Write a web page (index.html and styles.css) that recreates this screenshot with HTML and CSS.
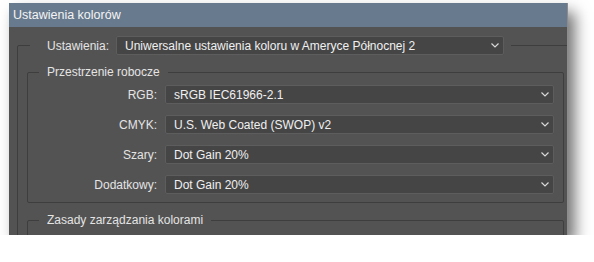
FILE: index.html
```html
<!DOCTYPE html>
<html>
<head>
	<meta charset="utf-8">
	<title>Ustawienia kolorów</title>
	<link rel="stylesheet" href="styles.css">
</head>
<body>
	<div class="window">
		<div class="titlebar">Ustawienia kolorów</div>
		<div class="content">
			<fieldset class="group outer">
				<legend class="settings">
					<span class="settings-label">Ustawienia:</span>
					<div class="select wide">
						<span>Uniwersalne ustawienia koloru w Ameryce Północnej 2</span>
						<svg class="chev" width="8" height="5" viewBox="0 0 8 5"><path d="M0.5 0.5 L4 4 L7.5 0.5" fill="none" stroke="#d8d8d8" stroke-width="1.2"/></svg>
					</div>
				</legend>

				<fieldset class="group inner">
					<legend>Przestrzenie robocze</legend>
					<div class="row">
						<label>RGB:</label>
						<div class="select">
							<span>sRGB IEC61966-2.1</span>
							<svg class="chev" width="8" height="5" viewBox="0 0 8 5"><path d="M0.5 0.5 L4 4 L7.5 0.5" fill="none" stroke="#d8d8d8" stroke-width="1.2"/></svg>
						</div>
					</div>
					<div class="row">
						<label>CMYK:</label>
						<div class="select">
							<span>U.S. Web Coated (SWOP) v2</span>
							<svg class="chev" width="8" height="5" viewBox="0 0 8 5"><path d="M0.5 0.5 L4 4 L7.5 0.5" fill="none" stroke="#d8d8d8" stroke-width="1.2"/></svg>
						</div>
					</div>
					<div class="row">
						<label>Szary:</label>
						<div class="select">
							<span>Dot Gain 20%</span>
							<svg class="chev" width="8" height="5" viewBox="0 0 8 5"><path d="M0.5 0.5 L4 4 L7.5 0.5" fill="none" stroke="#d8d8d8" stroke-width="1.2"/></svg>
						</div>
					</div>
					<div class="row">
						<label>Dodatkowy:</label>
						<div class="select">
							<span>Dot Gain 20%</span>
							<svg class="chev" width="8" height="5" viewBox="0 0 8 5"><path d="M0.5 0.5 L4 4 L7.5 0.5" fill="none" stroke="#d8d8d8" stroke-width="1.2"/></svg>
						</div>
					</div>
				</fieldset>

				<fieldset class="group inner policies">
					<legend>Zasady zarządzania kolorami</legend>
					<div class="spacer"></div>
				</fieldset>
			</fieldset>
		</div>
	</div>
</body>
</html>
```

FILE: styles.css
```css
*{
	margin:0;
	padding:0;
	box-sizing:border-box;
}
body{
	background:#fff;
	font-family:"Liberation Sans",Arial,sans-serif;
	font-size:12px;
	color:#e4e4e4;
}
.window{
	margin:3px 0 0 9px;
	width:559px;
	height:232px;
	overflow:hidden;
	background:#535353;
	border-right:1px solid #8c8c8c;
	box-shadow:7px 9px 14px rgba(0,0,0,.55);
	display:flex;
	flex-direction:column;
}
.titlebar{
	height:24px;
	flex:none;
	background:#687a8e;
	color:#f4f4f4;
	font-size:12.5px;
	line-height:24px;
	padding-left:4px;
}
.content{
	padding:9px 0 0 8px;
}
.group{
	border:1px solid #3e3e3e;
	border-radius:2px;
	min-width:0;
}
.outer{
	width:580px;
	padding:0 0 0 9px;
}
.settings{
	margin-left:3px;
	padding:0 7px 0 17px;
	display:flex;
	align-items:center;
}
.settings-label{
	margin-right:7px;
}
.select{
	height:19px;
	background:#454545;
	border:1px solid #5d5d5d;
	border-radius:2px;
	color:#f0f0f0;
	display:flex;
	align-items:center;
	justify-content:space-between;
	padding:0 4px 0 8px;
	width:389px;
}
.select.wide{
	width:388px;
}
.chev{
	flex:none;
}
.inner{
	width:537px;
	margin-top:10px;
	padding:6px 9px 8px 0;
	display:flex;
	flex-direction:column;
	gap:11px;
}
.inner legend{
	margin-left:11px;
	padding:0 8px;
}
.row{
	display:flex;
	align-items:center;
}
.row label{
	width:129px;
	text-align:right;
	margin-right:8px;
}
.policies{
	margin-top:10px;
}
.spacer{
	height:30px;
}
```
